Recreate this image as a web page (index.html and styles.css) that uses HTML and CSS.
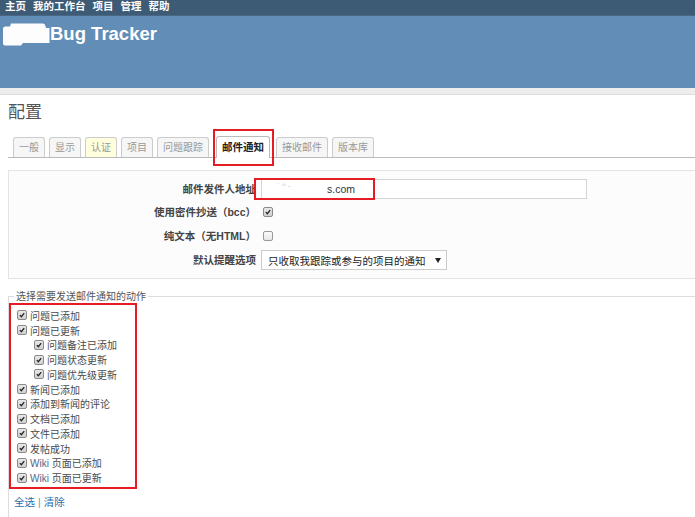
FILE: index.html
```html
<!DOCTYPE html>
<html lang="zh-CN">
<head>
<meta charset="utf-8">
<title>配置 - Bug Tracker</title>
<link rel="stylesheet" href="styles.css">
</head>
<body>
<div class="top-menu">
  <a>主页</a><a>我的工作台</a><a>项目</a><a>管理</a><a>帮助</a>
</div>
<div class="header">
  <div class="brand">
    <svg class="logo" width="48" height="23" viewBox="0 0 48 23"><path d="M9 0.5 H41 Q43 0.5 43.5 3 L44 5 H47.5 V20 H21 L19 22.5 H3 Q1 22.5 1 20.5 V5.5 Q1 3.5 3.5 3.5 H8 Z" fill="#fdfdfd"/></svg>
    <h1>Bug Tracker</h1>
  </div>
</div>
<div class="strip"></div>
<div class="content">
  <h2>配置</h2>
  <ul class="tabs">
    <li class="tab">一般</li>
    <li class="tab">显示</li>
    <li class="tab auth">认证</li>
    <li class="tab">项目</li>
    <li class="tab">问题跟踪</li>
    <li class="tab selected">邮件通知</li>
    <li class="tab">接收邮件</li>
    <li class="tab">版本库</li>
  </ul>
  <div class="box">
    <label class="lbl">邮件发件人地址</label>
    <div class="field"><div class="input"><span class="ghost">` ^ -</span>s.com</div></div>
    <label class="lbl">使用密件抄送（bcc）</label>
    <div class="field"><span class="cb checked"><svg viewBox="0 0 10 10"><path d="M2.3 5.1 L4.2 7.2 L7.8 2.6"/></svg></span></div>
    <label class="lbl">纯文本（无HTML）</label>
    <div class="field"><span class="cb"></span></div>
    <label class="lbl">默认提醒选项</label>
    <div class="field"><div class="select"><span>只收取我跟踪或参与的项目的通知</span><svg width="6" height="5" viewBox="0 0 6 5"><path d="M0 0 H6 L3 5 Z" fill="#222"/></svg></div></div>
  </div>
  <fieldset class="notify">
    <legend>选择需要发送邮件通知的动作</legend>
    <div class="actions">
      <div class="item"><span class="cb checked"><svg viewBox="0 0 10 10"><path d="M2.3 5.1 L4.2 7.2 L7.8 2.6"/></svg></span><span>问题已添加</span></div>
      <div class="item"><span class="cb checked"><svg viewBox="0 0 10 10"><path d="M2.3 5.1 L4.2 7.2 L7.8 2.6"/></svg></span><span>问题已更新</span></div>
      <div class="item sub"><span class="cb checked"><svg viewBox="0 0 10 10"><path d="M2.3 5.1 L4.2 7.2 L7.8 2.6"/></svg></span><span>问题备注已添加</span></div>
      <div class="item sub"><span class="cb checked"><svg viewBox="0 0 10 10"><path d="M2.3 5.1 L4.2 7.2 L7.8 2.6"/></svg></span><span>问题状态更新</span></div>
      <div class="item sub"><span class="cb checked"><svg viewBox="0 0 10 10"><path d="M2.3 5.1 L4.2 7.2 L7.8 2.6"/></svg></span><span>问题优先级更新</span></div>
      <div class="item"><span class="cb checked"><svg viewBox="0 0 10 10"><path d="M2.3 5.1 L4.2 7.2 L7.8 2.6"/></svg></span><span>新闻已添加</span></div>
      <div class="item"><span class="cb checked"><svg viewBox="0 0 10 10"><path d="M2.3 5.1 L4.2 7.2 L7.8 2.6"/></svg></span><span>添加到新闻的评论</span></div>
      <div class="item"><span class="cb checked"><svg viewBox="0 0 10 10"><path d="M2.3 5.1 L4.2 7.2 L7.8 2.6"/></svg></span><span>文档已添加</span></div>
      <div class="item"><span class="cb checked"><svg viewBox="0 0 10 10"><path d="M2.3 5.1 L4.2 7.2 L7.8 2.6"/></svg></span><span>文件已添加</span></div>
      <div class="item"><span class="cb checked"><svg viewBox="0 0 10 10"><path d="M2.3 5.1 L4.2 7.2 L7.8 2.6"/></svg></span><span>发帖成功</span></div>
      <div class="item"><span class="cb checked"><svg viewBox="0 0 10 10"><path d="M2.3 5.1 L4.2 7.2 L7.8 2.6"/></svg></span><span><span class="wiki">Wiki</span> 页面已添加</span></div>
      <div class="item"><span class="cb checked"><svg viewBox="0 0 10 10"><path d="M2.3 5.1 L4.2 7.2 L7.8 2.6"/></svg></span><span><span class="wiki">Wiki</span> 页面已更新</span></div>
    </div>
    <div class="links"><a>全选</a><span class="sep">|</span><a>清除</a></div>
  </fieldset>
</div>
</body>
</html>
```
FILE: styles.css
```css
html, body {
  margin: 0;
  padding: 0;
}
body {
  font-family: "Liberation Sans", "Noto Sans CJK SC", sans-serif;
  font-size: 10px;
  color: #484848;
  background: #ffffff;
  overflow: hidden;
}

.top-menu {
  height: 16px;
  background: #3e5b76;
  padding-left: 5px;
  display: flex;
  align-items: flex-start;
  gap: 7px;
  box-sizing: border-box;
  border-bottom: 1px solid #4a6886;
}
.top-menu a {
  color: #ffffff;
  font-weight: bold;
  font-size: 10.5px;
  line-height: 12px;
  text-decoration: none;
}

.header {
  height: 72px;
  background: #628db6;
  padding: 5px 0 0 2px;
  box-sizing: border-box;
}
.brand {
  display: flex;
  align-items: center;
  height: 26px;
}
.logo {
  display: block;
  flex: none;
}
.brand h1 {
  margin: 0;
  font-family: "Liberation Sans", sans-serif;
  font-weight: bold;
  font-size: 18.5px;
  line-height: 26px;
  color: #ffffff;
}

.strip {
  height: 6px;
  background: #ededed;
  border-bottom: 1px solid #dcdcdc;
}

.content {
  padding-left: 8px;
}
.content h2 {
  margin: 7px 0 0;
  font-size: 17px;
  line-height: 21px;
  font-weight: normal;
  color: #555555;
}

.tabs {
  list-style: none;
  margin: 13px 0 0;
  padding: 0 0 0 5px;
  height: 21px;
  border-bottom: 1px solid #bbbbbb;
  display: flex;
  align-items: flex-end;
  gap: 4px;
}
.tab {
  height: 20px;
  box-sizing: border-box;
  padding: 0 5px;
  border: 1px solid #cccccc;
  border-bottom: none;
  border-radius: 3px 3px 0 0;
  background: #f6f6f6;
  color: #999999;
  font-size: 10px;
  line-height: 19px;
}
.tab.auth {
  background: #ffffdd;
}
.tab.selected {
  position: relative;
  height: 22px;
  margin: 0 2px -1px 3px;
  background: #ffffff;
  border-color: #bbbbbb;
  color: #222222;
  font-weight: bold;
  font-size: 10.5px;
  line-height: 21px;
}
.tab.selected::after {
  content: "";
  position: absolute;
  top: -8px;
  left: -4px;
  right: -5px;
  bottom: -8px;
  border: 2px solid #e51c24;
}

.box {
  margin-top: 12px;
  background: #fcfcfc;
  border: 1px solid #e4e4e4;
  border-right: none;
  padding: 7px 0 6px;
  display: grid;
  grid-template-columns: 247px 1fr;
  grid-template-rows: 22px 24px 24px 24px;
  column-gap: 5px;
  align-items: center;
}
.lbl {
  text-align: right;
  font-weight: bold;
  font-size: 10.5px;
  line-height: 14px;
  color: #444444;
}
.field {
  display: flex;
  align-items: center;
}
.input {
  position: relative;
  width: 326px;
  height: 20px;
  box-sizing: border-box;
  border: 1px solid #d4d4d4;
  background: #ffffff;
  padding-left: 15px;
  font-size: 10.5px;
  line-height: 18px;
  color: #333333;
}
.input::after {
  content: "";
  position: absolute;
  left: -8px;
  top: -2px;
  width: 121px;
  height: 22px;
  box-sizing: border-box;
  border: 2px solid #e51c24;
}
.ghost {
  display: inline-block;
  width: 50px;
  color: #c4c4c4;
  font-size: 8px;
  vertical-align: top;
  line-height: 12px;
}
.field .cb {
  margin-left: 2px;
}
.select {
  width: 186px;
  height: 20px;
  box-sizing: border-box;
  border: 1px solid #cccccc;
  background: #ffffff;
  padding: 0 5px 0 6px;
  display: flex;
  align-items: center;
  justify-content: space-between;
  font-size: 10.5px;
  color: #222222;
}
.select svg {
  display: block;
}

.cb {
  display: inline-block;
  flex: none;
  width: 10px;
  height: 10px;
  box-sizing: border-box;
  border: 1px solid #9a9a9a;
  border-radius: 2px;
  background: linear-gradient(#fbfbfb, #e6e6e6);
}
.cb.checked {
  background: linear-gradient(#e8e8e8, #d0d0d0);
  border-color: #8a8a8a;
}
.cb svg {
  display: block;
  width: 8px;
  height: 8px;
}
.cb svg path {
  fill: none;
  stroke: #222222;
  stroke-width: 1.6;
}

.notify {
  margin: 11px 0 0;
  padding: 0 0 30px;
  border: 1px solid #dddddd;
  border-right: none;
  border-bottom: none;
  min-width: 0;
}
.notify legend {
  margin-left: 5px;
  padding: 0 2px;
  font-size: 10px;
  line-height: 13px;
  color: #555555;
}
.actions {
  width: 128px;
  box-sizing: border-box;
  border: 2px solid #e51c24;
  padding: 3px 0 2px 6px;
}
.item {
  display: flex;
  align-items: center;
  gap: 3px;
  height: 14.75px;
  font-size: 10px;
  color: #4a4a4a;
}
.item.sub {
  padding-left: 17px;
}
.wiki {
  color: #556688;
}
.links {
  margin-top: 6px;
  padding-left: 5px;
  font-size: 10.5px;
  line-height: 15px;
}
.links a {
  color: #2d6cab;
}
.links .sep {
  margin: 0 3px;
  color: #9a8aa0;
}
```
